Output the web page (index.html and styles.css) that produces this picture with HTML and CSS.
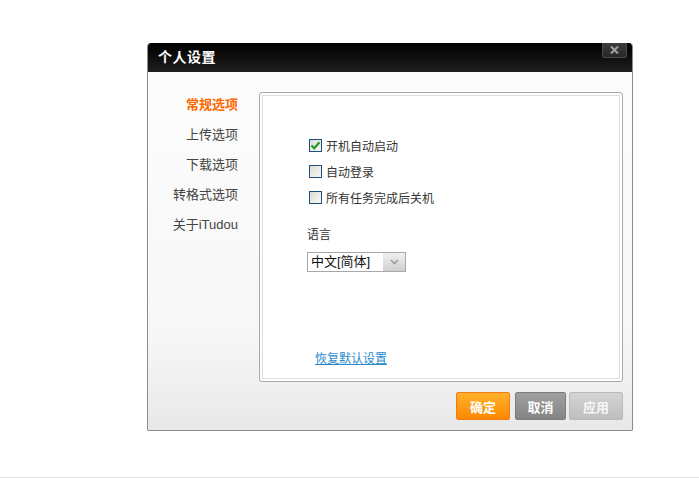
FILE: index.html
```html
<!DOCTYPE html>
<html lang="zh-CN">
<head>
  <meta charset="UTF-8">
  <title>个人设置</title>
  <link rel="stylesheet" href="styles.css">
</head>
<body>
  <div class="page">
    <div class="dialog">
      <div class="titlebar">
        <span class="title">个人设置</span>
        <span class="close">
          <svg width="9" height="8" viewBox="0 0 9 8"><path d="M1 0.5 L8 7.5 M8 0.5 L1 7.5" stroke="#a0a0a0" stroke-width="2"/></svg>
        </span>
      </div>

      <div class="dialog-body">
        <ul class="nav">
          <li class="active">常规选项</li>
          <li>上传选项</li>
          <li>下载选项</li>
          <li>转格式选项</li>
          <li>关于iTudou</li>
        </ul>

        <div class="panel">
          <div class="option">
            <span class="check checked">
              <svg width="11" height="11" viewBox="0 0 11 11"><path d="M1.5 5.5 L4.2 8.3 L9.5 2.2" fill="none" stroke="#2a9a2a" stroke-width="2.2"/></svg>
            </span>
            开机自动启动
          </div>
          <div class="option"><span class="check"></span>自动登录</div>
          <div class="option"><span class="check"></span>所有任务完成后关机</div>

          <div class="lang-label">语言</div>
          <div class="select">
            <span class="select-text">中文[简体]</span>
            <span class="select-arrow">
              <svg width="9" height="6" viewBox="0 0 9 6"><path d="M1 1 L4.5 4.5 L8 1" fill="none" stroke="#9a9a9a" stroke-width="1.6"/></svg>
            </span>
          </div>

          <a class="reset" href="#">恢复默认设置</a>
        </div>

        <div class="buttons">
          <button class="btn btn-ok">确定</button>
          <button class="btn btn-cancel">取消</button>
          <button class="btn btn-apply">应用</button>
        </div>
      </div>
    </div>
  </div>
</body>
</html>
```

FILE: styles.css
```css
body {
  margin: 0;
  background-color: white;
  font-family: "Liberation Sans", "Noto Sans CJK SC", sans-serif;
  color: #333;
}

.page {
  height: 478px;
  box-sizing: border-box;
  padding: 43px 0 0 147px;
  border-bottom: 1px solid #dcdcdc;
}

.dialog {
  width: 486px;
  height: 388px;
  box-sizing: border-box;
  border: 1px solid #8a8a8a;
  border-top: none;
  border-radius: 4px 4px 2px 2px;
  overflow: hidden;
  background: linear-gradient(#fdfdfd, #f7f7f7 75%, #e8e8e8);
}

.titlebar {
  height: 29px;
  background: linear-gradient(#000, #1e1e1e);
  display: flex;
  justify-content: space-between;
  align-items: flex-start;
}

.title {
  color: white;
  font-weight: bold;
  font-size: 14px;
  line-height: 29px;
  padding-left: 10px;
  letter-spacing: 0.5px;
}

.close {
  width: 25px;
  height: 15px;
  margin-right: 5px;
  box-sizing: border-box;
  background: linear-gradient(#3e3e3e, #262626);
  border: 1px solid #4a4a4a;
  border-top: none;
  border-radius: 0 0 3px 3px;
  display: flex;
  align-items: center;
  justify-content: center;
}

.close svg {
  display: block;
}

.dialog-body {
  display: grid;
  grid-template-columns: 111px 364px;
  grid-template-rows: 290px 28px;
  row-gap: 10px;
  padding-top: 20px;
}

.nav {
  list-style: none;
  margin: -2px 0 0 0;
  padding: 0 21px 0 0;
  text-align: right;
  font-size: 13px;
  line-height: 30px;
  color: #444;
}

.nav .active {
  color: #ff6600;
  font-weight: bold;
}

.panel {
  box-sizing: border-box;
  border: 1px solid #a9a9a9;
  border-radius: 3px;
  background: white;
  box-shadow: inset 0 0 0 2px #fff, inset 0 0 0 3px #dedede;
  padding: 39px 0 14px 47px;
  display: flex;
  flex-direction: column;
  align-items: flex-start;
  font-size: 12px;
}

.option {
  height: 26px;
  display: flex;
  align-items: center;
  color: #333;
}

.check {
  width: 13px;
  height: 13px;
  box-sizing: border-box;
  margin: 0 4px 0 2px;
  border: 1px solid #1f4f7c;
  background: linear-gradient(135deg, #dcdcd6, #f8f8f6);
  display: flex;
  align-items: center;
  justify-content: center;
}

.check svg {
  display: block;
}

.lang-label {
  margin-top: 17px;
  line-height: 16px;
  font-size: 12px;
}

.select {
  margin-top: 9px;
  width: 99px;
  height: 20px;
  box-sizing: border-box;
  border: 1px solid #a8a8a8;
  display: flex;
  align-items: stretch;
  background: white;
}

.select-text {
  flex: 1;
  font-size: 13px;
  line-height: 18px;
  padding-left: 3px;
  color: #111;
}

.select-arrow {
  width: 22px;
  background: linear-gradient(#f0f0f0, #cfcfcf);
  display: flex;
  align-items: center;
  justify-content: center;
  border-left: 1px solid #fff;
}

.reset {
  margin-top: auto;
  margin-left: 8px;
  line-height: 16px;
  color: #2a8acb;
  text-decoration: underline;
}

.buttons {
  grid-column: 2;
  display: flex;
  justify-content: flex-end;
}

.btn {
  height: 28px;
  box-sizing: border-box;
  border-radius: 2px;
  font-family: "Liberation Sans", "Noto Sans CJK SC", sans-serif;
  font-size: 13px;
  font-weight: bold;
  color: white;
  padding: 0;
  cursor: pointer;
}

.btn-ok {
  width: 54px;
  background: linear-gradient(#ffb22c, #ff8800);
  border: 1px solid #f07c18;
}

.btn-cancel {
  width: 51px;
  margin-left: 5px;
  background: linear-gradient(#a0a0a0, #848484);
  border: 1px solid #7c7c7c;
}

.btn-apply {
  width: 54px;
  margin-left: 3px;
  background: linear-gradient(#d4d4d4, #bebebe);
  border: 1px solid #bababa;
  color: #f6f6f6;
}
```
